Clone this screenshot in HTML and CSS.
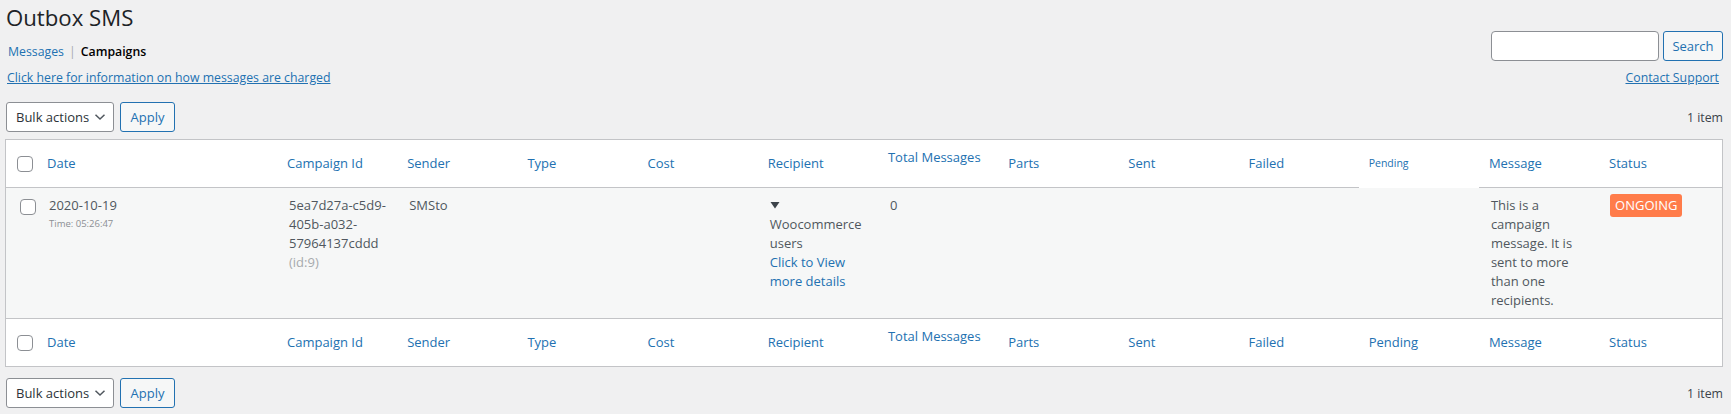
FILE: index.html
```html
<!DOCTYPE html>
<html lang="en">
<head>
<meta charset="utf-8">
<title>Outbox SMS</title>
<link rel="stylesheet" href="styles.css">
</head>
<body>
<div class="wrap">
  <div class="page-head">
    <div class="head-left">
      <h1 class="title">Outbox SMS</h1>
      <ul class="subnav">
        <li><a href="#" class="subnav-link">Messages</a></li>
        <li class="sep">|</li>
        <li class="current">Campaigns</li>
      </ul>
    </div>
    <form class="search-box">
      <input type="search" class="search-input" aria-label="Search">
      <button type="button" class="button btn-search">Search</button>
    </form>
  </div>

  <div class="info-row">
    <a href="#" class="info-link">Click here for information on how messages are charged</a>
    <a href="#" class="info-link">Contact Support</a>
  </div>

  <div class="tablenav top">
    <div class="actions">
      <button type="button" class="select">Bulk actions
        <svg class="chev" width="12" height="8" viewBox="0 0 12 8"><path d="M1.5 1.8 L6 6 L10.5 1.8" fill="none" stroke="#50575e" stroke-width="1.5"/></svg>
      </button>
      <button type="button" class="button btn-apply">Apply</button>
    </div>
    <span class="count">1 item</span>
  </div>

  <table class="list">
    <colgroup>
      <col class="c-cb"><col class="c-date">
      <col class="c-n"><col class="c-n"><col class="c-n"><col class="c-n"><col class="c-n"><col class="c-n">
      <col class="c-n"><col class="c-n"><col class="c-n"><col class="c-n"><col class="c-n">
      <col>
    </colgroup>
    <thead>
      <tr>
        <th class="cb cb-head"><input type="checkbox" class="check" aria-label="Select all"></th>
        <th><a href="#">Date</a></th>
        <th><a href="#">Campaign Id</a></th>
        <th><a href="#">Sender</a></th>
        <th><a href="#">Type</a></th>
        <th><a href="#">Cost</a></th>
        <th><a href="#">Recipient</a></th>
        <th class="top-th"><a href="#">Total Messages</a></th>
        <th><a href="#">Parts</a></th>
        <th><a href="#">Sent</a></th>
        <th><a href="#">Failed</a></th>
        <th class="pending-small"><a href="#">Pending</a></th>
        <th><a href="#">Message</a></th>
        <th><a href="#">Status</a></th>
      </tr>
    </thead>
    <tbody>
      <tr>
        <th class="cb cb-body"><input type="checkbox" class="check" aria-label="Select row"></th>
        <td>2020-10-19<div class="sub">Time: 05:26:47</div></td>
        <td>5ea7d27a-c5d9-405b-a032-57964137cddd<div class="muted">(id:9)</div></td>
        <td>SMSto</td>
        <td></td>
        <td></td>
        <td>
          <div class="caret"><svg width="10" height="8" viewBox="0 0 10 8"><path d="M0.5 1 L9.5 1 L5 7.5 Z" fill="#3c434a"/></svg></div>
          <div>Woocommerce users</div>
          <a href="#">Click to View more details</a>
        </td>
        <td>0</td>
        <td></td>
        <td></td>
        <td></td>
        <td></td>
        <td>This is a campaign message. It is sent to more than one recipients.</td>
        <td class="status-cell"><span class="badge">ONGOING</span></td>
      </tr>
    </tbody>
    <tfoot>
      <tr>
        <th class="cb cb-head"><input type="checkbox" class="check" aria-label="Select all"></th>
        <th><a href="#">Date</a></th>
        <th><a href="#">Campaign Id</a></th>
        <th><a href="#">Sender</a></th>
        <th><a href="#">Type</a></th>
        <th><a href="#">Cost</a></th>
        <th><a href="#">Recipient</a></th>
        <th class="top-th"><a href="#">Total Messages</a></th>
        <th><a href="#">Parts</a></th>
        <th><a href="#">Sent</a></th>
        <th><a href="#">Failed</a></th>
        <th><a href="#">Pending</a></th>
        <th><a href="#">Message</a></th>
        <th><a href="#">Status</a></th>
      </tr>
    </tfoot>
  </table>

  <div class="tablenav bottom">
    <div class="actions">
      <button type="button" class="select">Bulk actions
        <svg class="chev" width="12" height="8" viewBox="0 0 12 8"><path d="M1.5 1.8 L6 6 L10.5 1.8" fill="none" stroke="#50575e" stroke-width="1.5"/></svg>
      </button>
      <button type="button" class="button btn-apply">Apply</button>
    </div>
    <span class="count">1 item</span>
  </div>
</div>
</body>
</html>
```
FILE: styles.css
```css
* { box-sizing: border-box; }

html, body {
  margin: 0;
  padding: 0;
  background: #f0f0f1;
}

body {
  font-family: "Open Sans", "Noto Sans", sans-serif;
  font-size: 13px;
  line-height: 19px;
  color: #3c434a;
}

a { color: #2271b1; text-decoration: none; }

.wrap {
  padding: 0 8px 0 5px;
}

.page-head {
  display: flex;
  justify-content: space-between;
  align-items: flex-start;
}

.title {
  margin: 0;
  padding: 3px 0 0 1px;
  font-size: 22.2px;
  font-weight: 400;
  line-height: 30px;
  color: #1d2327;
}

.subnav {
  list-style: none;
  margin: 9px 0 0 3px;
  padding: 0;
  display: flex;
  gap: 5px;
  font-size: 12.3px;
  line-height: 19px;
}

.subnav .sep { color: #a7aaad; }
.subnav .current { color: #000; font-weight: 600; }

.search-box {
  display: flex;
  gap: 4px;
  margin: 31px 0 0 0;
}

.search-input {
  width: 168px;
  height: 30px;
  margin: 0;
  border: 1px solid #8c8f94;
  border-radius: 4px;
  background: #fff;
  font: inherit;
  padding: 0 8px;
}

.button {
  height: 30px;
  margin: 0;
  padding: 0;
  border: 1px solid #2271b1;
  border-radius: 3px;
  background: #f6f7f7;
  color: #2271b1;
  font: inherit;
  line-height: 28px;
  text-align: center;
  cursor: pointer;
}

.btn-search { width: 60px; }
.btn-apply { width: 55px; }

.info-row {
  display: flex;
  justify-content: space-between;
  margin-top: 7px;
  padding: 0 4px 0 2px;
  font-size: 12.3px;
}

.info-link { text-decoration: underline; }

.tablenav {
  display: flex;
  justify-content: space-between;
  align-items: center;
  height: 30px;
}

.tablenav.top { margin: 15px 0 7px; }
.tablenav.bottom { margin: 11px 0 0; }

.actions {
  display: flex;
  gap: 6px;
  padding-left: 1px;
}

.select {
  display: flex;
  align-items: center;
  justify-content: space-between;
  width: 108px;
  height: 30px;
  margin: 0;
  padding: 0 7px 0 9px;
  border: 1px solid #8c8f94;
  border-radius: 3px;
  background: #fff;
  color: #2c3338;
  font: inherit;
  line-height: 28px;
  cursor: pointer;
}

.chev { display: block; }

.count { color: #3c434a; font-size: 12.3px; }

.list {
  width: 100%;
  table-layout: fixed;
  border-collapse: separate;
  border-spacing: 0;
  border: 1px solid #c3c4c7;
  background: #fff;
}

.c-cb { width: 31px; }
.c-date { width: 240px; }
.c-n { width: 120.2px; }

.list th, .list td {
  text-align: left;
  font-weight: 400;
  padding: 8px 10px;
  vertical-align: top;
}

.list tbody td { padding: 8px 9px 8px 12px; }
.list tbody td.status-cell { padding-left: 11px; }

.list thead th, .list tfoot th {
  height: 48px;
  vertical-align: middle;
  padding: 0 10px;
}

.list thead th { border-bottom: 1px solid #c3c4c7; }
.list tfoot th { border-top: 1px solid #c3c4c7; }

.list thead th.top-th, .list tfoot th.top-th {
  vertical-align: top;
  padding-top: 8px;
}

.list thead th.pending-small {
  font-size: 10.5px;
  border-bottom-color: #fff;
}

.list tbody tr { background: #f6f7f7; }
.list tbody td { color: #50575e; }

.list .cb { padding: 0; }
.list .cb-head { padding-left: 11px; }
.list tbody .cb-body { padding: 11px 0 0 14px; vertical-align: top; }

.check {
  -webkit-appearance: none;
  appearance: none;
  display: block;
  width: 16px;
  height: 16px;
  margin: 0;
  border: 1px solid #8c8f94;
  border-radius: 4px;
  background: #fff;
}

.sub {
  font-size: 9.5px;
  line-height: 17px;
  color: #8c8f94;
}

.muted { color: #a7aaad; }

.caret { height: 19px; display: flex; align-items: center; }
.caret svg { display: block; margin-top: -1px; }

.badge {
  display: inline-block;
  margin-top: -2px;
  padding: 2px 5px;
  border-radius: 3px;
  background: #ff7c4a;
  color: #fff;
  line-height: 19px;
  vertical-align: top;
}
```
